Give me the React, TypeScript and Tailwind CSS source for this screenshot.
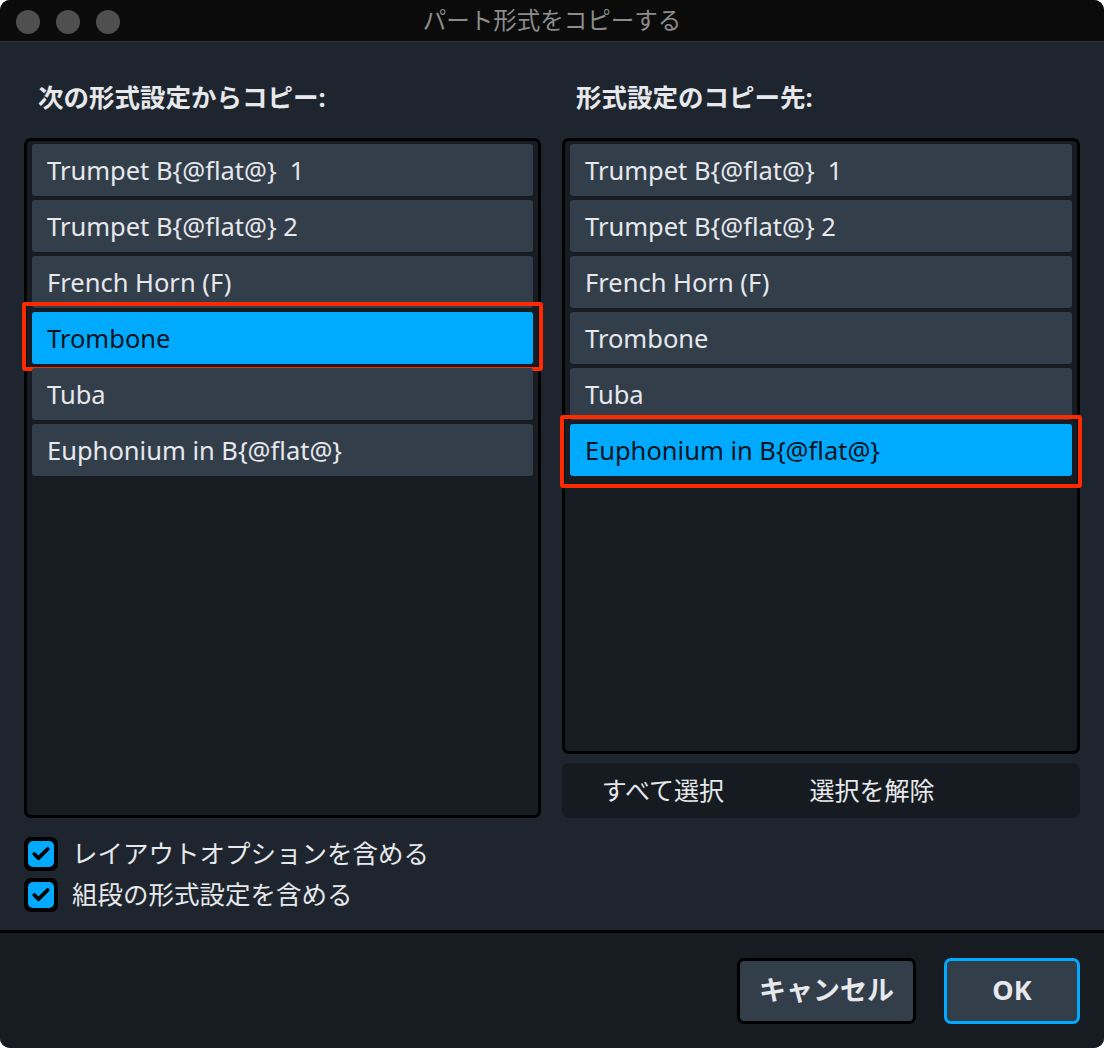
import { Check } from 'lucide-react';

const parts = [
    'Trumpet B{@flat@}  1',
    'Trumpet B{@flat@} 2',
    'French Horn (F)',
    'Trombone',
    'Tuba',
    'Euphonium in B{@flat@}',
];

function PartList({ selected, tall }: { selected: number; tall: boolean }) {
    return (
        <div
            className={`relative rounded-[7px] border-[3px] border-black bg-[#171c22] px-[5px] pt-[3px] ${tall ? 'h-[680px]' : 'h-[616px]'}`}
        >
            <div className="flex flex-col gap-1">
                {parts.map((p, i) => (
                    <div key={p} className="relative">
                        <div
                            className={`flex h-[52px] items-center rounded-[3px] px-[15px] text-[25.5px] ${
                                i === selected ? 'bg-[#00aaff] text-[#0a1420]' : 'bg-[#333e4b] text-[#e6e8eb]'
                            }`}
                        >
                            <span className="whitespace-pre">{p}</span>
                        </div>
                        {/* red annotation box */}
                        {i === selected && (
                            <div
                                className={`absolute -inset-x-[10px] rounded-[3px] border-[4px] border-[#ff2a00] ${
                                    tall ? '-top-[10px] -bottom-[7px]' : '-top-[9px] -bottom-[12px]'
                                }`}
                            />
                        )}
                    </div>
                ))}
            </div>
        </div>
    );
}

function CheckRow({ label }: { label: string }) {
    return (
        <div className="flex h-[35px] items-center gap-[14px]">
            <div className="flex h-[34px] w-[34px] items-center justify-center rounded-[7px] bg-black">
                <div className="flex h-[26px] w-[26px] items-center justify-center rounded-[5px] bg-[#00aaff]">
                    <Check className="h-[20px] w-[20px] text-black" strokeWidth={4.5} />
                </div>
            </div>
            <span className="text-[25.5px] text-[#e6e8eb]">{label}</span>
        </div>
    );
}

export default function App() {
    return (
        <div className="h-[1048px] w-[1104px] bg-white" style={{ fontFamily: '"Noto Sans", "Noto Sans CJK JP", sans-serif' }}>
            <div className="flex h-full w-full flex-col overflow-hidden rounded-[10px] bg-[#1e252e]">
                {/* Title bar */}
                <div className="relative flex h-[42px] shrink-0 items-center justify-center border-b border-[#2c2f33] bg-[#0b0b0b]">
                    <div className="absolute left-[16px] top-[10px] flex gap-[16px]">
                        <div className="h-[24px] w-[24px] rounded-full bg-[#4f4f4f]" />
                        <div className="h-[24px] w-[24px] rounded-full bg-[#4f4f4f]" />
                        <div className="h-[24px] w-[24px] rounded-full bg-[#4f4f4f]" />
                    </div>
                    <span className="text-[23.5px] text-[#8c8c8c]">パート形式をコピーする</span>
                </div>

                {/* Body */}
                <div className="flex flex-1 gap-[21px] px-[24px] pt-[35px]">
                    {/* Left column */}
                    <div className="flex w-[517px] flex-col">
                        <div className="mb-[21px] pl-[14px] text-[25.5px] font-bold leading-[40px] text-[#e6e8eb]">
                            次の形式設定からコピー:
                        </div>
                        <PartList selected={3} tall />
                        <div className="mt-[18px] flex flex-col gap-[6px]">
                            <CheckRow label="レイアウトオプションを含める" />
                            <CheckRow label="組段の形式設定を含める" />
                        </div>
                    </div>

                    {/* Right column */}
                    <div className="flex w-[518px] flex-col">
                        <div className="mb-[21px] pl-[14px] text-[25.5px] font-bold leading-[40px] text-[#e6e8eb]">
                            形式設定のコピー先:
                        </div>
                        <PartList selected={5} tall={false} />
                        <div className="mt-[9px] flex h-[55px] items-center rounded-[7px] bg-[#161b21] text-[25px] text-[#e6e8eb]">
                            <span className="w-[202px] text-center">すべて選択</span>
                            <span className="w-[216px] text-center">選択を解除</span>
                        </div>
                    </div>
                </div>

                {/* Footer */}
                <div className="flex h-[118px] shrink-0 items-center justify-end gap-[28px] border-t-[3px] border-black bg-[#171c22] pr-[24px]">
                    <button className="h-[66px] w-[179px] rounded-[7px] border-[3px] border-black bg-[#333e4b] text-[27px] font-bold text-[#e6e8eb]">
                        キャンセル
                    </button>
                    <button className="h-[66px] w-[136px] rounded-[7px] border-[3px] border-[#00aaff] bg-[#333e4b] text-[27px] font-bold text-[#e6e8eb]">
                        OK
                    </button>
                </div>
            </div>
        </div>
    );
}
